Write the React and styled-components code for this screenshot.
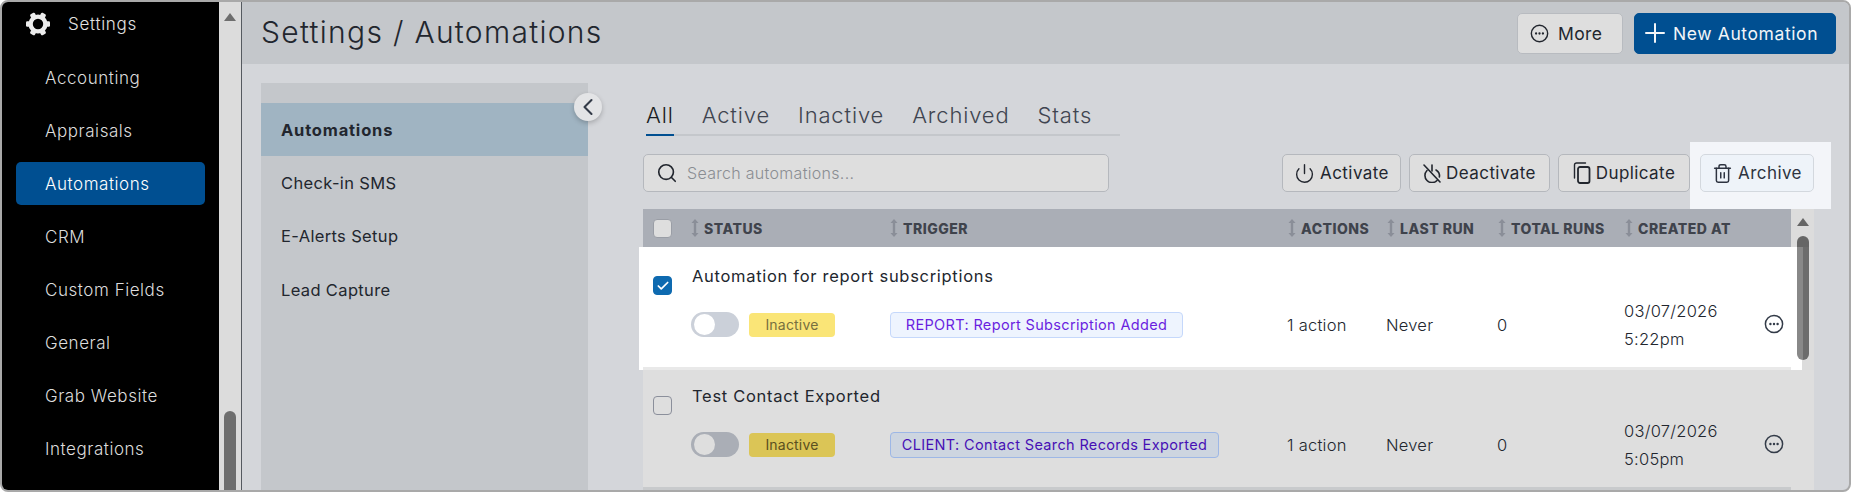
import React from 'react';
import styled, { createGlobalStyle } from 'styled-components';
import { Search, Power, Trash2, ChevronLeft, Check } from 'lucide-react';

const GlobalStyle = createGlobalStyle`
  html, body { margin: 0; padding: 0; overflow: hidden; }
  body { font-family: "Inter", "Open Sans", sans-serif; color: #1f2430; }
  * { box-sizing: border-box; }
`;

const Frame = styled.div`
  width: 1851px;
  height: 492px;
  display: flex;
  overflow: hidden;
  border: 2px solid #a9a9a9;
  border-radius: 8px;
  background: #d4d6da;
`;

const Sidebar = styled.aside`
  width: 217px;
  flex: none;
  background: #000;
  display: flex;
  flex-direction: column;
  gap: 10px;
  padding: 0 14px;
  overflow: hidden;
`;

const SettingsRow = styled.div`
  height: 44px;
  flex: none;
  display: flex;
  align-items: center;
  gap: 18px;
  padding-left: 10px;
  color: #e2e2e2;
  font-size: 17px;
  font-weight: 300;
  letter-spacing: 0.7px;
`;

const NavItem = styled.div`
  height: 43px;
  flex: none;
  display: flex;
  align-items: center;
  padding-left: 29px;
  border-radius: 5px;
  font-size: 17px;
  font-weight: 300;
  letter-spacing: 0.55px;
  color: ${p => (p.$active ? '#fff' : '#dcdcdc')};
  background: ${p => (p.$active ? '#004f91' : 'transparent')};
`;

const Rail = styled.div`
  width: 23px;
  flex: none;
  background: #dcdcdc;
  border-right: 1px solid #555a60;
  display: flex;
  flex-direction: column;
  align-items: center;
  justify-content: space-between;
  padding-top: 11px;
`;

const RailArrow = styled.div`
  width: 0;
  height: 0;
  border-left: 6px solid transparent;
  border-right: 6px solid transparent;
  border-bottom: 8px solid #6e6e6e;
`;

const RailThumb = styled.div`
  width: 12px;
  height: 79px;
  background: #6e6e6e;
  border-radius: 6px 6px 0 0;
`;

const Main = styled.main`
  flex: 1;
  min-width: 0;
  display: flex;
  flex-direction: column;
`;

const Header = styled.header`
  height: 62px;
  flex: none;
  background: #c4c7cb;
  display: flex;
  align-items: center;
  justify-content: space-between;
  padding: 0 13px 0 19px;
`;

const Title = styled.h1`
  margin: -3px 0 0;
  font-size: 30px;
  font-weight: 300;
  letter-spacing: 1.3px;
  color: #22262e;
`;

const HeaderActions = styled.div`
  display: flex;
  gap: 11px;
`;

const HeaderButton = styled.button`
  height: 41px;
  display: flex;
  align-items: center;
  gap: ${p => (p.$primary ? '8px' : '9px')};
  padding: 0 ${p => (p.$primary ? '10px' : '12px')};
  width: ${p => (p.$primary ? '202px' : '106px')};
  border-radius: 5px;
  font: 400 17.5px "Inter", sans-serif;
  letter-spacing: ${p => (p.$primary ? '0.6px' : '0.4px')};
  white-space: nowrap;
  color: ${p => (p.$primary ? '#f2f5f8' : '#22262e')};
  background: ${p => (p.$primary ? '#004f91' : '#dedede')};
  border: 1px solid ${p => (p.$primary ? '#004f91' : '#b8bbc0')};
`;

const Body = styled.div`
  flex: 1;
  min-height: 0;
  display: flex;
  padding: 19px 0 0 19px;
`;

const SidePanel = styled.nav`
  position: relative;
  width: 327px;
  flex: none;
  background: #c4c7cb;
  padding-top: 20px;
`;

const PanelItem = styled.div`
  height: 53.4px;
  display: flex;
  align-items: center;
  padding-left: 20px;
  font-size: 16.5px;
  font-weight: ${p => (p.$active ? 700 : 400)};
  letter-spacing: ${p => (p.$active ? '0.8px' : '0.35px')};
  color: #22262e;
  background: ${p => (p.$active ? '#a0b4c2' : 'transparent')};
`;

const Collapse = styled.button`
  position: absolute;
  top: 10px;
  right: -14px;
  width: 28px;
  height: 28px;
  padding: 0;
  display: flex;
  align-items: center;
  justify-content: center;
  border: none;
  border-radius: 50%;
  background: #e3e4e6;
  color: #333b48;
  box-shadow: 0 2px 5px rgba(0, 0, 0, 0.22);
`;

const Content = styled.section`
  width: 1171px;
  margin-left: 55px;
  flex: none;
`;

const Tabs = styled.div`
  width: 474px;
  height: 53px;
  margin-left: 3px;
  display: flex;
  align-items: flex-end;
  gap: 28px;
  border-bottom: 2px solid #c4c7cb;
`;

const Tab = styled.div`
  height: 47px;
  margin-bottom: -2px;
  padding-top: 13px;
  font-size: 22px;
  font-weight: 300;
  letter-spacing: 0.85px;
  color: ${p => (p.$active ? '#1a1d24' : '#3f4550')};
  border-bottom: 2px solid ${p => (p.$active ? '#004f91' : 'transparent')};
`;

const Toolbar = styled.div`
  height: 73px;
  display: flex;
  align-items: center;
  justify-content: space-between;
  padding: 18px 0 17px;
`;

const SearchBox = styled.div`
  width: 466px;
  height: 38px;
  display: flex;
  align-items: center;
  gap: 9px;
  padding-left: 12px;
  border: 1px solid #b5b8bd;
  border-radius: 5px;
  background: #dedede;
  color: #22262e;
`;

const Placeholder = styled.span`
  font-size: 16px;
  font-weight: 300;
  letter-spacing: 0.3px;
  color: #8a8d92;
`;

const ToolActions = styled.div`
  display: flex;
  gap: 8px;
`;

const ToolButton = styled.button`
  height: 38px;
  width: ${p => p.$w}px;
  display: flex;
  align-items: center;
  justify-content: center;
  gap: 5px;
  padding: 0;
  border: 1px solid #b5b8bd;
  border-radius: 5px;
  background: #dedede;
  color: #22262e;
  font: 400 17px "Inter", sans-serif;
  letter-spacing: 0.42px;
`;

const ArchiveSpot = styled.div`
  margin: -12px -17px -17px -8px;
  padding: 12px 17px 17px 10px;
  background: #f3f5f9;
`;

const ArchiveButton = styled(ToolButton)`
  background: #eef3f9;
  border-color: #d3d8de;
  color: #2d3340;
`;

const Table = styled.div`
  position: relative;
  height: 281px;
  background: #dcdcdc;
`;

const Columns = styled.div`
  display: grid;
  grid-template-columns: 47px 199px 398px 99px 111px 127px 1fr;
`;

const HeadRow = styled(Columns)`
  width: 1148px;
  height: 38px;
  align-items: center;
  margin-bottom: 3px;
  background: #aaaeb6;
`;

const HeadCell = styled.div`
  display: flex;
  align-items: center;
  gap: 5px;
  padding-left: 1px;
  white-space: nowrap;
  font-size: 14px;
  font-weight: 800;
  letter-spacing: 0.5px;
  color: #3f434c;
`;

const CheckCell = styled.div`
  padding-left: 10px;
`;

const Box = styled.div`
  width: 19px;
  height: 19px;
  display: flex;
  align-items: center;
  justify-content: center;
  border-radius: 4px;
  border: 1px solid ${p => (p.$checked ? '#0e6ab0' : p.$head ? '#9a9ea6' : '#8b8f9b')};
  background: ${p => (p.$checked ? '#0e6ab0' : '#dedede')};
  color: #fff;
`;

const RowWrap = styled.div`
  height: 120px;
  margin-left: ${p => (p.$selected ? '-4px' : '0')};
  margin-right: ${p => (p.$selected ? '12px' : '0')};
  padding-left: ${p => (p.$selected ? '4px' : '0')};
  padding-right: ${p => (p.$selected ? '11px' : '23px')};
  background: ${p => (p.$selected ? '#fff' : '#dedede')};
  box-shadow: ${p => (p.$selected ? '0 -3px 0 #fff' : 'none')};
`;

const RowGrid = styled(Columns)`
  height: 120px;
  grid-template-rows: 30px 67px;
  align-content: start;
  padding-top: 11px;
  border-bottom: 3px solid ${p => (p.$selected ? '#e9e9e9' : '#c8cacc')};
`;

const RowCheck = styled(CheckCell)`
  grid-column: 1;
  grid-row: 1 / 3;
  padding-top: 15px;
`;

const RowTitle = styled.div`
  grid-column: 2 / -1;
  grid-row: 1;
  padding-left: 2px;
  line-height: 30px;
  font-size: 16.5px;
  font-weight: 400;
  letter-spacing: 0.7px;
  color: #22262e;
`;

const Cell = styled.div`
  grid-row: 2;
  grid-column: ${p => p.$col};
  display: flex;
  align-items: center;
  gap: 10px;
  white-space: nowrap;
  font-size: 16.5px;
  font-weight: 300;
  letter-spacing: 0.25px;
  color: #22262e;
`;

const StatusCell = styled(Cell)`
  padding-left: 1px;
`;

const TriggerCell = styled(Cell)`
  padding-left: 1px;
`;

const DateCell = styled(Cell)`
  display: block;
  align-self: center;
  line-height: 28px;
`;

const MenuCell = styled(Cell)`
  justify-content: flex-end;
  padding-right: 7px;
  padding-bottom: 2px;
  color: #333b48;
`;

const Toggle = styled.div`
  width: 48px;
  height: 25px;
  flex: none;
  padding: 2px 3px;
  border-radius: 13px;
  background: ${p => (p.$dim ? '#aaaeb6' : '#cbd0d9')};
`;

const Knob = styled.div`
  width: 21px;
  height: 21px;
  border-radius: 50%;
  background: ${p => (p.$dim ? '#dedede' : '#fff')};
`;

const StatusBadge = styled.span`
  width: 86px;
  height: 24px;
  display: flex;
  align-items: center;
  justify-content: center;
  border-radius: 4px;
  font-size: 14px;
  font-weight: 400;
  letter-spacing: 0.2px;
  color: ${p => (p.$dim ? '#5a5020' : '#77703f')};
  background: ${p => (p.$dim ? '#dbc556' : '#fae577')};
`;

const TriggerTag = styled.span`
  width: ${p => p.$w}px;
  height: 26px;
  display: flex;
  align-items: center;
  justify-content: center;
  white-space: nowrap;
  border-radius: 4px;
  font-size: 14.5px;
  font-weight: 400;
  letter-spacing: 0.35px;
  color: ${p => (p.$dim ? '#4710b5' : '#6a1fe0')};
  background: ${p => (p.$dim ? '#cdd5e0' : '#eef4fe')};
  border: 1px solid ${p => (p.$dim ? '#9db7e6' : '#c5d8fb')};
`;

const TableScroll = styled.div`
  position: absolute;
  top: 0;
  right: 0;
  width: 23px;
  height: 100%;
  display: flex;
  flex-direction: column;
  align-items: center;
  padding-top: 9px;
`;

const ScrollUp = styled.div`
  width: 0;
  height: 0;
  border-left: 6px solid transparent;
  border-right: 6px solid transparent;
  border-bottom: 8px solid #666;
`;

const ScrollThumb = styled.div`
  width: 12px;
  height: 124px;
  margin-top: 10px;
  border-radius: 6px;
  background: linear-gradient(to bottom, #666 0, #666 11px, transparent 11px),
    linear-gradient(to right, #888 50%, #6c6c6c 50%);
`;

const GearIcon = () => (
  <svg width="24" height="24" viewBox="-12 -12 24 24" fill="#ececec">
    <circle r="7.4" fill="none" stroke="#ececec" strokeWidth="4.4" />
    {[0, 60, 120, 180, 240, 300].map(deg => (
      <rect key={deg} x="-2.7" y="-12" width="5.4" height="4" rx="1.2" transform={`rotate(${deg + 90})`} />
    ))}
  </svg>
);

const DotsCircle = ({ size = 20 }) => (
  <svg width={size} height={size} viewBox="0 0 20 20" fill="none">
    <circle cx="10" cy="10" r="8.6" stroke="currentColor" strokeWidth="1.5" />
    <circle cx="6.4" cy="10" r="1.2" fill="currentColor" />
    <circle cx="10" cy="10" r="1.2" fill="currentColor" />
    <circle cx="13.6" cy="10" r="1.2" fill="currentColor" />
  </svg>
);

const PlusIcon = () => (
  <svg width="20" height="20" viewBox="0 0 20 20" fill="none" stroke="currentColor" strokeWidth="2" strokeLinecap="round">
    <path d="M10 1v18M1 10h18" />
  </svg>
);

const DeactivateIcon = () => (
  <svg width="18" height="19" viewBox="0 0 18 19" fill="none" stroke="currentColor" strokeWidth="1.6" strokeLinecap="round">
    <path d="M4 6.5a7 7 0 0 0 10 10" />
    <path d="M13 6a7 7 0 0 1 3.4 7" />
    <path d="M9 1v6" />
    <path d="M1 1l16 17" />
  </svg>
);

const DuplicateIcon = () => (
  <svg width="18" height="22" viewBox="0 0 18 22" fill="none" stroke="currentColor" strokeLinecap="round">
    <path d="M1.5 16V3a2 2 0 0 1 2-2h9" strokeWidth="1.4" />
    <rect x="5" y="5" width="11.5" height="16" rx="2" strokeWidth="1.8" />
  </svg>
);

const SortIcon = () => (
  <svg width="8" height="18" viewBox="0 0 8 18" fill="#8a8e98">
    <path d="M4 0L7.5 4H5.2v10h2.3L4 18 .5 14h2.3V4H.5z" />
  </svg>
);

const navItems = ['Accounting', 'Appraisals', 'Automations', 'CRM', 'Custom Fields', 'General', 'Grab Website', 'Integrations'];
const panelItems = ['Automations', 'Check-in SMS', 'E-Alerts Setup', 'Lead Capture'];
const tabs = ['All', 'Active', 'Inactive', 'Archived', 'Stats'];
const headers = ['STATUS', 'TRIGGER', 'ACTIONS', 'LAST RUN', 'TOTAL RUNS', 'CREATED AT'];

const rows = [
  { title: 'Automation for report subscriptions', trigger: 'REPORT: Report Subscription Added', tagWidth: 293, time: '5:22pm', selected: true },
  { title: 'Test Contact Exported', trigger: 'CLIENT: Contact Search Records Exported', tagWidth: 329, time: '5:05pm', selected: false },
];

const AutomationRow = ({ row }) => {
  const dim = !row.selected;
  return (
    <RowWrap $selected={row.selected}>
      <RowGrid $selected={row.selected}>
        <RowCheck>
          <Box $checked={row.selected}>{row.selected && <Check size={14} strokeWidth={3} />}</Box>
        </RowCheck>
        <RowTitle>{row.title}</RowTitle>
        <StatusCell $col={2}>
          <Toggle $dim={dim}><Knob $dim={dim} /></Toggle>
          <StatusBadge $dim={dim}>Inactive</StatusBadge>
        </StatusCell>
        <TriggerCell $col={3}>
          <TriggerTag $w={row.tagWidth} $dim={dim}>{row.trigger}</TriggerTag>
        </TriggerCell>
        <Cell $col={4}>1 action</Cell>
        <Cell $col={5}>Never</Cell>
        <Cell $col={6}>0</Cell>
        <DateCell $col={7}>03/07/2026<br />{row.time}</DateCell>
        <MenuCell $col={7}><DotsCircle /></MenuCell>
      </RowGrid>
    </RowWrap>
  );
};

export default function App() {
  return (
    <>
      <GlobalStyle />
      <Frame>
        <Sidebar>
          <SettingsRow><GearIcon />Settings</SettingsRow>
          {navItems.map(item => (
            <NavItem key={item} $active={item === 'Automations'}>{item}</NavItem>
          ))}
        </Sidebar>
        <Rail>
          <RailArrow />
          <RailThumb />
        </Rail>
        <Main>
          <Header>
            <Title>Settings / Automations</Title>
            <HeaderActions>
              <HeaderButton><DotsCircle size={19} />More</HeaderButton>
              <HeaderButton $primary><PlusIcon />New Automation</HeaderButton>
            </HeaderActions>
          </Header>
          <Body>
            <SidePanel>
              {panelItems.map(item => (
                <PanelItem key={item} $active={item === 'Automations'}>{item}</PanelItem>
              ))}
              <Collapse><ChevronLeft size={28} strokeWidth={1.8} /></Collapse>
            </SidePanel>
            <Content>
              <Tabs>
                {tabs.map(tab => (
                  <Tab key={tab} $active={tab === 'All'}>{tab}</Tab>
                ))}
              </Tabs>
              <Toolbar>
                <SearchBox>
                  <Search size={22} strokeWidth={1.8} />
                  <Placeholder>Search automations...</Placeholder>
                </SearchBox>
                <ToolActions>
                  <ToolButton $w={119}><Power size={21} strokeWidth={1.6} />Activate</ToolButton>
                  <ToolButton $w={141}><DeactivateIcon />Deactivate</ToolButton>
                  <ToolButton $w={132}><DuplicateIcon />Duplicate</ToolButton>
                  <ArchiveSpot>
                    <ArchiveButton $w={114}><Trash2 size={21} strokeWidth={1.7} />Archive</ArchiveButton>
                  </ArchiveSpot>
                </ToolActions>
              </Toolbar>
              <Table>
                <HeadRow>
                  <CheckCell><Box $head /></CheckCell>
                  {headers.map(h => (
                    <HeadCell key={h}><SortIcon />{h}</HeadCell>
                  ))}
                </HeadRow>
                {rows.map(row => <AutomationRow key={row.title} row={row} />)}
                <TableScroll>
                  <ScrollUp />
                  <ScrollThumb />
                </TableScroll>
              </Table>
            </Content>
          </Body>
        </Main>
      </Frame>
    </>
  );
}
